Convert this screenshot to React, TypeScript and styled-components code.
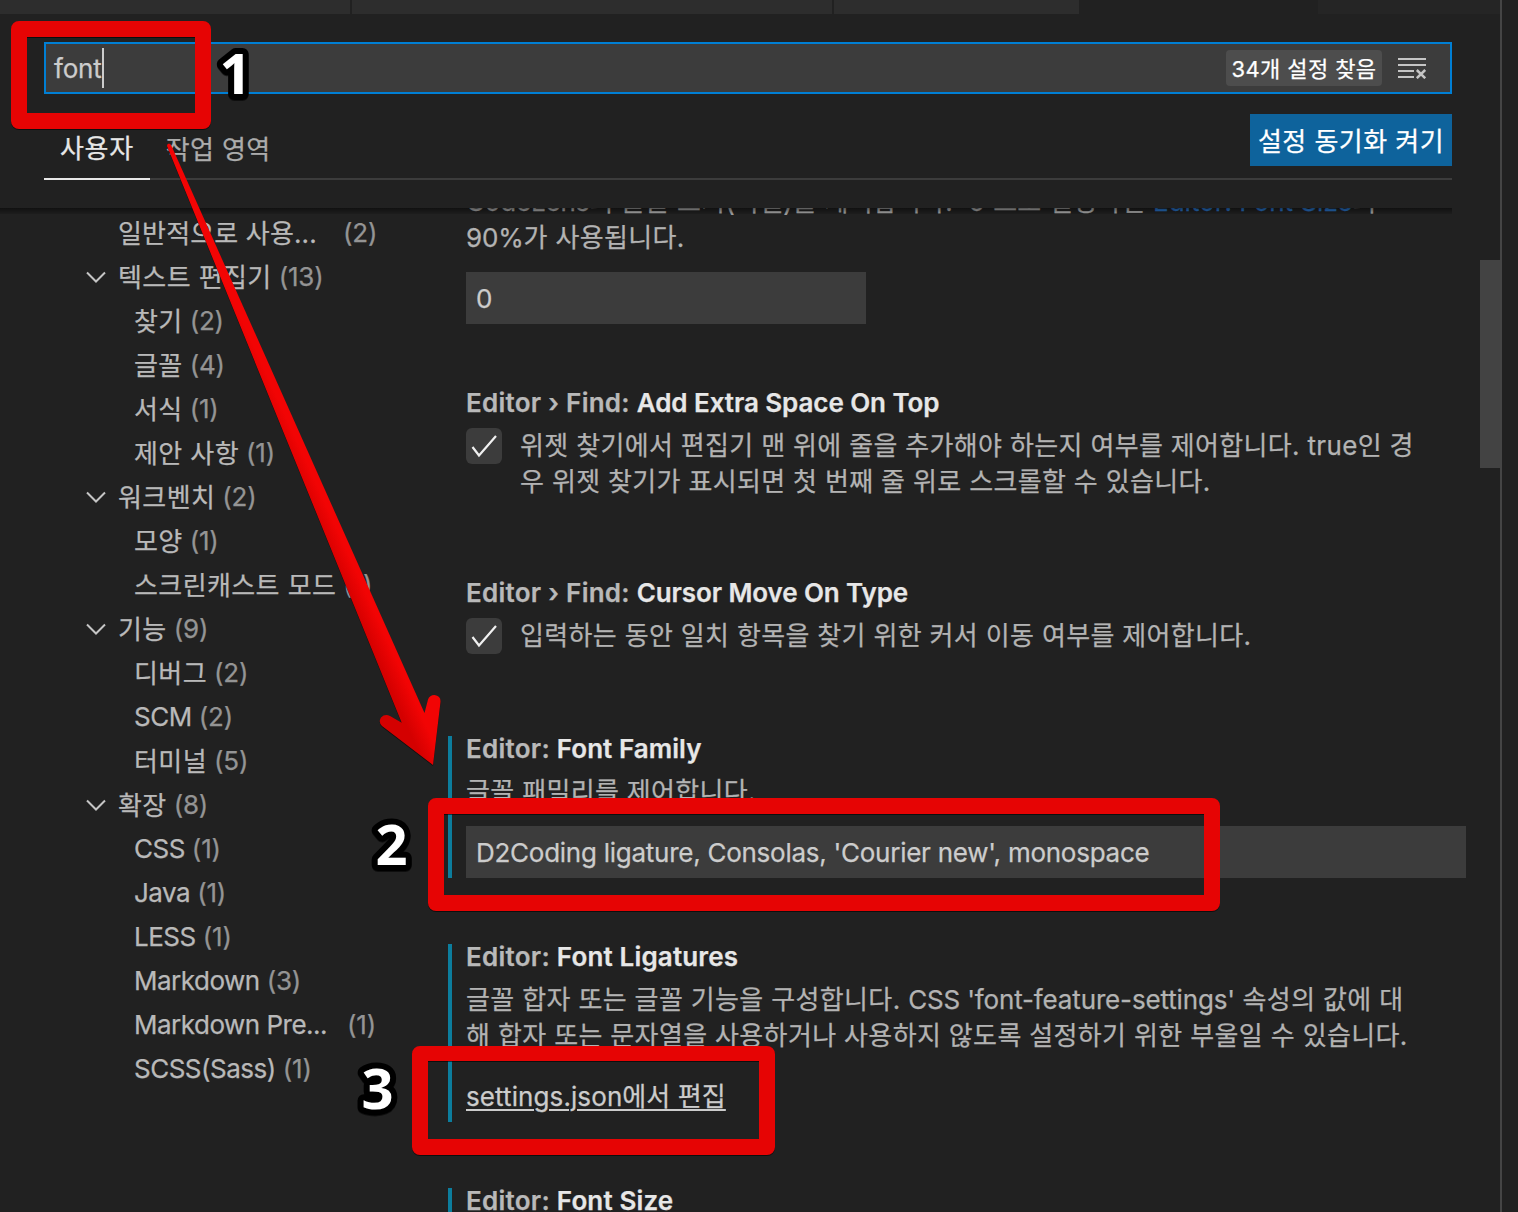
import React from 'react';
import styled, { createGlobalStyle } from 'styled-components';

const Global = createGlobalStyle`
  * { box-sizing: border-box; }
  body {
    margin: 0;
    background: #212121;
    overflow: hidden;
    font-family: Inter, "Noto Sans CJK KR", sans-serif;
    font-size: 26px;
    color: #cccccc;
    -webkit-font-smoothing: antialiased;
    -webkit-text-stroke: 0.25px currentColor;
  }
`;

const Window = styled.div`
  position: relative;
  display: flex;
  width: 1518px;
  height: 1212px;
  overflow: hidden;
  background: #212121;
`;

const Editor = styled.main`
  display: flex;
  flex-direction: column;
  width: 1502px;
  border-right: 2px solid #454545;
`;

const TabStrip = styled.div`
  display: flex;
  gap: 2px;
  height: 14px;
  flex: none;
`;

const FileTab = styled.div<{ $w: number; $tone: string }>`
  width: ${(p) => p.$w}px;
  flex: none;
  background: ${(p) => p.$tone};
`;

const Header = styled.header`
  display: flex;
  flex-direction: column;
  height: 194px;
  flex: none;
  padding: 28px 48px 0 44px;
`;

const SearchBox = styled.div`
  display: flex;
  align-items: center;
  height: 52px;
  padding: 0 24px 0 8px;
  border: 2px solid #007fd4;
  background: #3c3c3c;
`;

const Query = styled.span`
  padding-top: 2px;
  line-height: 40px;
  letter-spacing: -0.2px;
`;

const Caret = styled.span`
  width: 2px;
  height: 40px;
  margin-right: auto;
  background: #cccccc;
`;

const ResultBadge = styled.span`
  width: 156px;
  height: 36px;
  margin-right: 16px;
  border-radius: 4px;
  background: #4d4d4d;
  color: #ffffff;
  font-size: 22px;
  line-height: 38px;
  letter-spacing: 0.4px;
  text-align: center;
  white-space: nowrap;
`;

const TabsRow = styled.div`
  display: flex;
  height: 86px;
  border-bottom: 2px solid #3c3c3c;
`;

const ScopeTab = styled.div<{ $active?: boolean }>`
  height: 86px;
  padding: 24px 16px 0;
  border-bottom: 2px solid ${(p) => (p.$active ? '#e7e7e7' : 'transparent')};
  color: ${(p) => (p.$active ? '#e7e7e7' : '#acacac')};
  line-height: ${(p) => (p.$active ? 61 : 63)}px;
  letter-spacing: ${(p) => (p.$active ? 0.67 : 0.35)}px;
  white-space: nowrap;
`;

const SyncButton = styled.button`
  width: 202px;
  height: 52px;
  margin: 20px 0 0 auto;
  padding: 0;
  border: 0;
  background: #0e639c;
  color: #ffffff;
  font: inherit;
  line-height: 52px;
  padding-top: 2px;
  letter-spacing: 0.45px;
  white-space: nowrap;
`;

const Body = styled.div`
  position: relative;
  display: flex;
  flex: 1;
  min-height: 0;
  overflow: hidden;
`;

const ScrollShadow = styled.div`
  position: absolute;
  top: 0;
  left: 0;
  width: 1452px;
  height: 6px;
  background: linear-gradient(rgba(0, 0, 0, 0.5), rgba(0, 0, 0, 0.12));
`;

const Tree = styled.nav`
  width: 448px;
  flex: none;
  padding: 3px 0 0 86px;
`;

const TreeRow = styled.div<{ $child?: boolean }>`
  display: flex;
  align-items: flex-start;
  height: 44px;
  padding-left: ${(p) => (p.$child ? 48 : 0)}px;
  white-space: nowrap;
`;

const Twistie = styled.svg`
  width: 20px;
  height: 12px;
  margin: 16px 12px 0 0;
  flex: none;
  fill: none;
  stroke: #c5c5c5;
  stroke-width: 2;
`;

const Label = styled.span<{ $w?: number; $latin?: boolean }>`
  width: ${(p) => (p.$w ? `${p.$w}px` : 'auto')};
  color: #b9b9b9;
  line-height: ${(p) => (p.$latin ? 44 : 46)}px;
  letter-spacing: ${(p) => (p.$latin ? -0.5 : p.$w ? 0.15 : 0.4)}px;
`;

const Count = styled.span`
  margin-left: 7px;
  color: #949494;
  line-height: 44px;
  letter-spacing: -0.2px;
`;

const Settings = styled.section`
  display: flex;
  flex-direction: column;
  width: 1032px;
  margin-top: -25px;
`;

const Setting = styled.article<{ $gap: number; $modified?: boolean }>`
  flex: none;
  margin-bottom: ${(p) => p.$gap}px;
  padding-left: 14px;
  border-left: 4px solid ${(p) => (p.$modified ? '#0c7d9d' : 'transparent')};
`;

const Title = styled.h3<{ $ls: number }>`
  height: 26px;
  margin: 0 0 11px;
  font-size: 26px;
  line-height: 26px;
  font-weight: 600;
  letter-spacing: ${(p) => p.$ls}px;
  white-space: nowrap;
  color: #e7e7e7;
`;

const Category = styled.span`
  color: #b9b9b9;
  letter-spacing: 0.26px;
  -webkit-text-stroke-color: #b9b9b9;
`;

const Text = styled.p`
  margin: 0;
  color: #b3b3b3;
  white-space: nowrap;
`;

const Line = styled.span<{ $ls?: number }>`
  display: block;
  height: 36px;
  line-height: 38px;
  letter-spacing: ${(p) => p.$ls ?? 0.33}px;
`;

const Latin = styled.span`
  letter-spacing: -0.15px;
`;

const Link = styled.span`
  color: #2a78d0;
  letter-spacing: 0;
`;

const CheckRow = styled.div`
  display: flex;
  align-items: flex-start;
  gap: 18px;
`;

const CheckBox = styled.span`
  display: flex;
  width: 36px;
  height: 36px;
  margin-top: 1px;
  flex: none;
  border-radius: 6px;
  background: #3c3c3c;
`;

const Field = styled.div<{ $w: number }>`
  width: ${(p) => p.$w}px;
  height: 52px;
  margin-top: 17px;
  padding: 0 10px;
  background: #3c3c3c;
  line-height: 54px;
  letter-spacing: -0.26px;
  white-space: nowrap;
`;

const EditLink = styled.a`
  display: block;
  height: 69px;
  padding-top: 26px;
  line-height: 36px;
  letter-spacing: 0.1px;
  color: #cccccc;
  text-decoration: underline;
  text-decoration-thickness: 2px;
  text-underline-offset: 3px;
  text-decoration-skip-ink: auto;
  white-space: nowrap;
`;

const Scrollbar = styled.div`
  width: 20px;
  height: 208px;
  margin-top: 52px;
  background: #434343;
`;

const Annotations = styled.svg`
  position: absolute;
  inset: 0;
  filter: drop-shadow(0 1px 0.5px rgba(0, 0, 0, 0.55));
`;

const Marker = styled.text`
  font-family: "Open Sans", sans-serif;
  font-size: 56px;
  font-weight: 700;
  fill: #ffffff;
  stroke: #000000;
  stroke-width: 12px;
  stroke-linejoin: round;
  paint-order: stroke;
  -webkit-text-stroke: 12px #000000;
`;

type Node = { name: string; count: number; child?: boolean; group?: boolean; latin?: boolean; w?: number };

const nodes: Node[] = [
  { name: '일반적으로 사용...', count: 2, w: 218 },
  { name: '텍스트 편집기', count: 13, group: true },
  { name: '찾기', count: 2, child: true },
  { name: '글꼴', count: 4, child: true },
  { name: '서식', count: 1, child: true },
  { name: '제안 사항', count: 1, child: true },
  { name: '워크벤치', count: 2, group: true },
  { name: '모양', count: 1, child: true },
  { name: '스크린캐스트 모드', count: 1, child: true },
  { name: '기능', count: 9, group: true },
  { name: '디버그', count: 2, child: true },
  { name: 'SCM', count: 2, child: true, latin: true },
  { name: '터미널', count: 5, child: true },
  { name: '확장', count: 8, group: true },
  { name: 'CSS', count: 1, child: true, latin: true },
  { name: 'Java', count: 1, child: true, latin: true },
  { name: 'LESS', count: 1, child: true, latin: true },
  { name: 'Markdown', count: 3, child: true, latin: true },
  { name: 'Markdown Pre...', count: 1, child: true, latin: true, w: 206 },
  { name: 'SCSS(Sass)', count: 1, child: true, latin: true },
];

const Check = () => (
  <CheckBox>
    <svg width="36" height="36" viewBox="0 0 36 36" fill="none" stroke="#f0f0f0" strokeWidth="2.2">
      <path d="M6.5 19 L13 27.5 L30 8" />
    </svg>
  </CheckBox>
);

const ClearIcon = () => (
  <svg width="28" height="22" viewBox="0 0 28 22" stroke="#c5c5c5" strokeWidth="2" fill="none">
    <path d="M0 2H28M0 8H28M0 14H16M0 20H16" />
    <path d="M18.8 13L27.200 21.200M27.200 13L18.800 21.200" strokeWidth="2.5" />
  </svg>
);

export default function App() {
  return (
    <>
      <Global />
      <Window>
        <Editor>
          <TabStrip>
            <FileTab $w={350} $tone="#2d2d2d" />
            <FileTab $w={480} $tone="#2d2d2d" />
            <FileTab $w={245} $tone="#2d2d2d" />
            <FileTab $w={235} $tone="#212121" />
            <FileTab $w={182} $tone="#252525" />
          </TabStrip>
          <Header>
            <SearchBox>
              <Query>font</Query>
              <Caret />
              <ResultBadge>34개 설정 찾음</ResultBadge>
              <ClearIcon />
            </SearchBox>
            <TabsRow>
              <ScopeTab $active>사용자</ScopeTab>
              <ScopeTab>작업 영역</ScopeTab>
              <SyncButton>설정 동기화 켜기</SyncButton>
            </TabsRow>
          </Header>
          <Body>
            <Tree>
              {nodes.map((n) => (
                <TreeRow key={n.name} $child={n.child}>
                  {n.group && (
                    <Twistie viewBox="0 0 20 12">
                      <path d="M1 1.5L10 10.5L19 1.5" />
                    </Twistie>
                  )}
                  {!n.group && !n.child && <Twistie viewBox="0 0 20 12" />}
                  <Label $w={n.w} $latin={n.latin}>{n.name}</Label>
                  <Count>({n.count})</Count>
                </TreeRow>
              ))}
            </Tree>
            <Settings>
              <Setting $gap={66}>
                <Text>
                  <Line $ls={0.22}>
                    <Latin>CodeLens</Latin>의 글꼴 크기(픽셀)를 제어합니다. '0'으로 설정하면 <Link>Editor: Font Size</Link>의
                  </Line>
                  <Line>
                    <Latin>90%</Latin>가 사용됩니다.
                  </Line>
                </Text>
                <Field $w={400}>0</Field>
              </Setting>
              <Setting $gap={81}>
                <Title $ls={-0.07}>
                  <Category>Editor › Find: </Category>Add Extra Space On Top
                </Title>
                <CheckRow>
                  <Check />
                  <Text>
                    <Line>위젯 찾기에서 편집기 맨 위에 줄을 추가해야 하는지 여부를 제어합니다. true인 경</Line>
                    <Line>우 위젯 찾기가 표시되면 첫 번째 줄 위로 스크롤할 수 있습니다.</Line>
                  </Text>
                </CheckRow>
              </Setting>
              <Setting $gap={82}>
                <Title $ls={-0.1}>
                  <Category>Editor › Find: </Category>Cursor Move On Type
                </Title>
                <CheckRow>
                  <Check />
                  <Text>
                    <Line>입력하는 동안 일치 항목을 찾기 위한 커서 이동 여부를 제어합니다.</Line>
                  </Text>
                </CheckRow>
              </Setting>
              <Setting $gap={66} $modified>
                <Title $ls={0.05}>
                  <Category>Editor: </Category>Font Family
                </Title>
                <Text>
                  <Line>글꼴 패밀리를 제어합니다.</Line>
                </Text>
                <Field $w={1000}>D2Coding ligature, Consolas, 'Courier new', monospace</Field>
              </Setting>
              <Setting $gap={66} $modified>
                <Title $ls={0.17}>
                  <Category>Editor: </Category>Font Ligatures
                </Title>
                <Text>
                  <Line $ls={0.35}>
                    글꼴 합자 또는 글꼴 기능을 구성합니다. <Latin>CSS 'font-feature-settings'</Latin> 속성의 값에 대
                  </Line>
                  <Line $ls={0.35}>해 합자 또는 문자열을 사용하거나 사용하지 않도록 설정하기 위한 부울일 수 있습니다.</Line>
                </Text>
                <EditLink>settings.json에서 편집</EditLink>
              </Setting>
              <Setting $gap={0} $modified>
                <Title $ls={0.15}>
                  <Category>Editor: </Category>Font Size
                </Title>
              </Setting>
            </Settings>
            <Scrollbar />
            <ScrollShadow />
          </Body>
        </Editor>
        <Annotations width="1518" height="1212" viewBox="0 0 1518 1212">
          <defs>
            <linearGradient id="shaft" gradientUnits="userSpaceOnUse" x1="364" y1="632" x2="386" y2="622">
              <stop offset="0" stopColor="#d40000" />
              <stop offset="0.75" stopColor="#f20404" />
              <stop offset="1" stopColor="#f20404" />
            </linearGradient>
          </defs>
          <g fill="#e60404" fillRule="evenodd">
            <path d="M19 21H203a8 8 0 0 1 8 8V121a8 8 0 0 1-8 8H19a8 8 0 0 1-8-8V29a8 8 0 0 1 8-8ZM27 37V113H195V37Z" />
            <path d="M436 798H1212a8 8 0 0 1 8 8V903a8 8 0 0 1-8 8H436a8 8 0 0 1-8-8V806a8 8 0 0 1 8-8ZM444 814V895H1204V814Z" />
            <path d="M420 1046H767a8 8 0 0 1 8 8V1147a8 8 0 0 1-8 8H420a8 8 0 0 1-8-8V1054a8 8 0 0 1 8-8ZM428 1061V1139H759V1061Z" />
          </g>
          <path
            fill="url(#shaft)"
            d="M167 146Q167 144 169 143.6Q171 144 172 147L424.500 713L428 699.500Q429.500 695 434.500 695Q441 696 440.500 702L433 765L382 726Q378 722 381 717.500Q385 713.500 390 716L401.700 722.700Z"
          />
          <Marker x="219.500" y="94">1</Marker>
          <Marker x="375.500" y="865">2</Marker>
          <Marker x="361.500" y="1109">3</Marker>
        </Annotations>
      </Window>
    </>
  );
}
